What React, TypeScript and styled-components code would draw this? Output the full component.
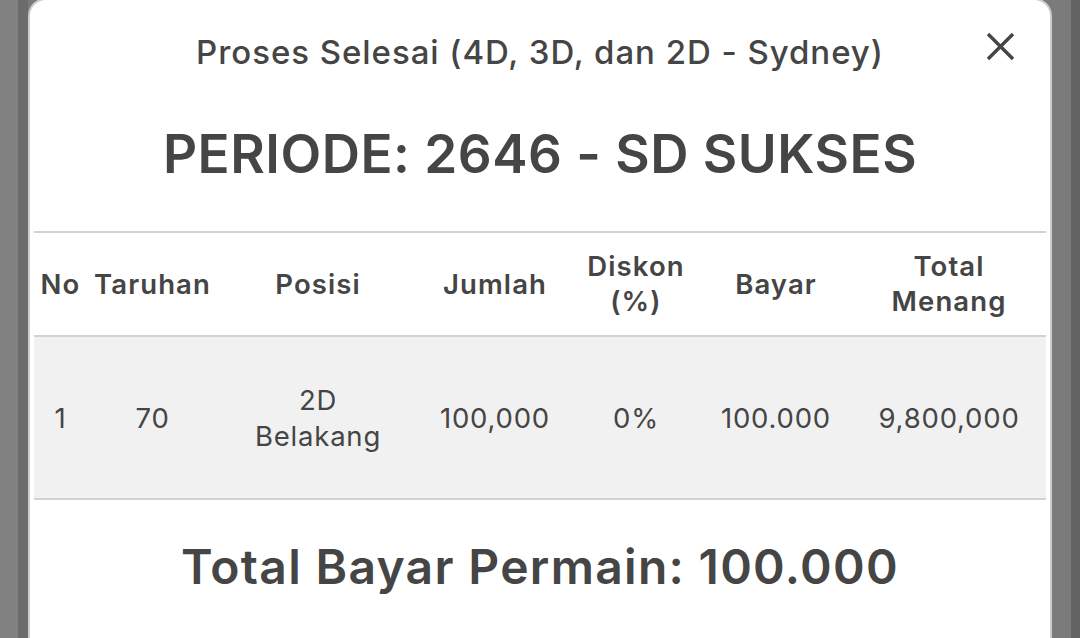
import styled, { createGlobalStyle } from "styled-components";

const GlobalStyle = createGlobalStyle`
  html, body {
    margin: 0;
    padding: 0;
    height: 100%;
    overflow: hidden;
  }
  body {
    font-family: Inter, "Open Sans", "Liberation Sans", sans-serif;
    color: #454545;
  }
`;

const Page = styled.div`
  width: 1080px;
  height: 638px;
  display: flex;
  align-items: flex-start;
  background: #7b7b7b;
`;

const Backdrop = styled.div<{ $tone: string; $w: number }>`
  width: ${(p) => p.$w}px;
  height: 100%;
  flex-shrink: 0;
  background: ${(p) => p.$tone};
`;

const Modal = styled.div`
  width: 1012px;
  height: 660px;
  margin-top: -2px;
  flex-shrink: 0;
  background: #fff;
  border: 2px solid #cdcdcd;
  border-bottom: none;
  border-radius: 18px 18px 0 0;
  padding: 0 4px;
  box-sizing: content-box;
  display: flex;
  flex-direction: column;
`;

const Header = styled.div`
  display: grid;
  grid-template-columns: 1fr auto 1fr;
  align-items: center;
  padding-top: 32px;
`;

const Title = styled.h4`
  grid-column: 2;
  margin: 0;
  font-size: 33px;
  font-weight: 500;
  line-height: 40px;
  letter-spacing: 0.95px;
  white-space: nowrap;
`;

const CloseButton = styled.button`
  justify-self: end;
  margin-right: 31px;
  margin-top: -12px;
  width: 29px;
  height: 29px;
  padding: 0;
  border: none;
  background: none;
  cursor: pointer;
  display: flex;
  align-items: center;
  justify-content: center;
`;

const Periode = styled.h2`
  margin: 47px 0 0;
  text-align: center;
  font-size: 53px;
  font-weight: 600;
  line-height: 70px;
  letter-spacing: 0.5px;
`;

const Table = styled.table`
  margin-top: 42px;
  width: 100%;
  border-collapse: collapse;
  table-layout: fixed;
  font-size: 27.5px;
`;

const Col = styled.col<{ $w?: number }>`
  width: ${(p) => (p.$w ? `${p.$w}px` : "auto")};
`;

const HeadRow = styled.tr`
  border-top: 2px solid #d2d2d2;
  border-bottom: 2px solid #d2d2d2;
`;

const Th = styled.th`
  height: 102px;
  padding: 0 2px;
  text-align: center;
  font-weight: 600;
  line-height: 35px;
  letter-spacing: 1.1px;
`;

const BodyRow = styled.tr`
  background: #f1f1f1;
  border-bottom: 2px solid #d2d2d2;
`;

const Td = styled.td`
  height: 161px;
  padding: 0 2px;
  text-align: center;
  font-weight: 400;
  line-height: 36px;
  letter-spacing: 0.8px;
`;

const Total = styled.h2`
  margin: 37px 0 0;
  text-align: center;
  font-size: 48px;
  font-weight: 600;
  line-height: 60px;
  letter-spacing: 1.3px;
`;

const columns = [
  { label: ["No"], w: 53 },
  { label: ["Taruhan"], w: 131 },
  { label: ["Posisi"], w: 200 },
  { label: ["Jumlah"], w: 154 },
  { label: ["Diskon", "(%)"], w: 128 },
  { label: ["Bayar"], w: 152 },
  { label: ["Total", "Menang"] },
];

const rows = [
  [["1"], ["70"], ["2D", "Belakang"], ["100,000"], ["0%"], ["100.000"], ["9,800,000"]],
];

const Lines = ({ parts }: { parts: string[] }) => (
  <>
    {parts.map((p, i) => (
      <span key={i}>
        {i > 0 && <br />}
        {p}
      </span>
    ))}
  </>
);

export default function App() {
  return (
    <>
      <GlobalStyle />
      <Page>
        <Backdrop $tone="#828282" $w={18} />
        <Backdrop $tone="#6c6c6c" $w={10} />
        <Modal>
          <Header>
            <Title>Proses Selesai (4D, 3D, dan 2D - Sydney)</Title>
            <CloseButton aria-label="Tutup">
              <svg width="29" height="29" viewBox="0 0 29 29">
                <path
                  d="M2 2 L27 27 M27 2 L2 27"
                  stroke="#454545"
                  strokeWidth="3.4"
                  fill="none"
                />
              </svg>
            </CloseButton>
          </Header>
          <Periode>PERIODE: 2646 - SD SUKSES</Periode>
          <Table>
            <colgroup>
              {columns.map((c, i) => (
                <Col key={i} $w={c.w} />
              ))}
            </colgroup>
            <thead>
              <HeadRow>
                {columns.map((c, i) => (
                  <Th key={i}>
                    <Lines parts={c.label} />
                  </Th>
                ))}
              </HeadRow>
            </thead>
            <tbody>
              {rows.map((r, i) => (
                <BodyRow key={i}>
                  {r.map((cell, j) => (
                    <Td key={j}>
                      <Lines parts={cell} />
                    </Td>
                  ))}
                </BodyRow>
              ))}
            </tbody>
          </Table>
          <Total>Total Bayar Permain: 100.000</Total>
        </Modal>
        <Backdrop $tone="#7b7b7b" $w={19} />
        <Backdrop $tone="#636363" $w={9} />
      </Page>
    </>
  );
}
